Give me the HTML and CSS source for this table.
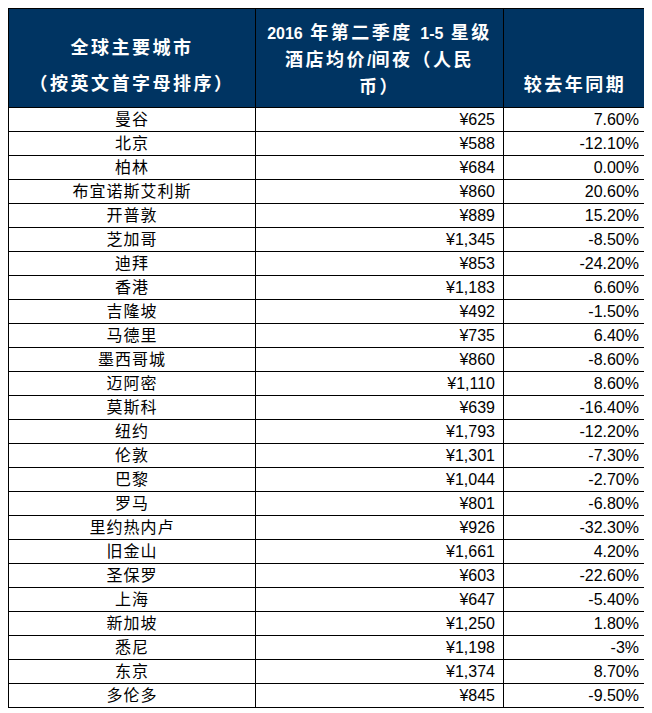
FILE: index.html
```html
<!DOCTYPE html>
<html lang="zh-CN">
<head>
<meta charset="utf-8">
<title>全球主要城市酒店均价</title>
<link rel="stylesheet" href="styles.css">
</head>
<body>
<table class="rates">
  <colgroup>
    <col class="col-city">
    <col class="col-price">
    <col class="col-change">
  </colgroup>
  <thead>
    <tr class="head-row">
      <th class="h-city">全球主要城市<br>（按英文首字母排序）</th>
      <th class="h-price"><span class="num">2016</span> 年第二季度 <span class="num">1-5</span> 星级<br>酒店均价<span class="num">/</span>间夜（人民<br>币）</th>
      <th class="h-change">较去年同期</th>
    </tr>
  </thead>
  <tbody>
    <tr><td class="city">曼谷</td><td class="val">¥625</td><td class="val pct">7.60%</td></tr>
    <tr><td class="city">北京</td><td class="val">¥588</td><td class="val pct">-12.10%</td></tr>
    <tr><td class="city">柏林</td><td class="val">¥684</td><td class="val pct">0.00%</td></tr>
    <tr><td class="city">布宜诺斯艾利斯</td><td class="val">¥860</td><td class="val pct">20.60%</td></tr>
    <tr><td class="city">开普敦</td><td class="val">¥889</td><td class="val pct">15.20%</td></tr>
    <tr><td class="city">芝加哥</td><td class="val">¥1,345</td><td class="val pct">-8.50%</td></tr>
    <tr><td class="city">迪拜</td><td class="val">¥853</td><td class="val pct">-24.20%</td></tr>
    <tr><td class="city">香港</td><td class="val">¥1,183</td><td class="val pct">6.60%</td></tr>
    <tr><td class="city">吉隆坡</td><td class="val">¥492</td><td class="val pct">-1.50%</td></tr>
    <tr><td class="city">马德里</td><td class="val">¥735</td><td class="val pct">6.40%</td></tr>
    <tr><td class="city">墨西哥城</td><td class="val">¥860</td><td class="val pct">-8.60%</td></tr>
    <tr><td class="city">迈阿密</td><td class="val">¥1,110</td><td class="val pct">8.60%</td></tr>
    <tr><td class="city">莫斯科</td><td class="val">¥639</td><td class="val pct">-16.40%</td></tr>
    <tr><td class="city">纽约</td><td class="val">¥1,793</td><td class="val pct">-12.20%</td></tr>
    <tr><td class="city">伦敦</td><td class="val">¥1,301</td><td class="val pct">-7.30%</td></tr>
    <tr><td class="city">巴黎</td><td class="val">¥1,044</td><td class="val pct">-2.70%</td></tr>
    <tr><td class="city">罗马</td><td class="val">¥801</td><td class="val pct">-6.80%</td></tr>
    <tr><td class="city">里约热内卢</td><td class="val">¥926</td><td class="val pct">-32.30%</td></tr>
    <tr><td class="city">旧金山</td><td class="val">¥1,661</td><td class="val pct">4.20%</td></tr>
    <tr><td class="city">圣保罗</td><td class="val">¥603</td><td class="val pct">-22.60%</td></tr>
    <tr><td class="city">上海</td><td class="val">¥647</td><td class="val pct">-5.40%</td></tr>
    <tr><td class="city">新加坡</td><td class="val">¥1,250</td><td class="val pct">1.80%</td></tr>
    <tr><td class="city">悉尼</td><td class="val">¥1,198</td><td class="val pct">-3%</td></tr>
    <tr><td class="city">东京</td><td class="val">¥1,374</td><td class="val pct">8.70%</td></tr>
    <tr><td class="city">多伦多</td><td class="val">¥845</td><td class="val pct">-9.50%</td></tr>
  </tbody>
</table>
</body>
</html>
```

FILE: styles.css
```css
html, body {
  background: #ffffff;
}

body {
  margin: 8px;
  font-family: "Liberation Sans", "Noto Sans CJK SC", sans-serif;
  color: #000000;
}

.rates {
  border-collapse: collapse;
  table-layout: fixed;
  width: 638px;
}

.col-city { width: 247px; }
.col-price { width: 248px; }
.col-change { width: 143px; }

.rates th,
.rates td {
  border: 1px solid #000000;
  padding: 0;
}

.rates .head-row {
  height: 99px;
}

.rates th {
  background: #003462;
  color: #ffffff;
  font-family: "Liberation Sans", "Noto Sans CJK SC", sans-serif;
  font-weight: bold;
  font-size: 18px;
  letter-spacing: 2.5px;
  text-align: center;
  vertical-align: top;
}

.rates th .num {
  font-size: 16px;
  letter-spacing: 0;
}

.rates th.h-city {
  line-height: 36px;
  padding-top: 21px;
}

.rates th.h-price {
  line-height: 26px;
  padding-top: 11px;
}

.rates th.h-change {
  line-height: 26px;
  padding-top: 63px;
}

.rates tbody tr {
  height: 24px;
}

.rates td {
  font-size: 16px;
  line-height: 20px;
  vertical-align: middle;
}

.rates td.city {
  text-align: center;
  letter-spacing: 1px;
}

.rates td.val {
  text-align: right;
  padding-right: 8px;
}

.rates td.pct {
  padding-right: 7px;
}
```
